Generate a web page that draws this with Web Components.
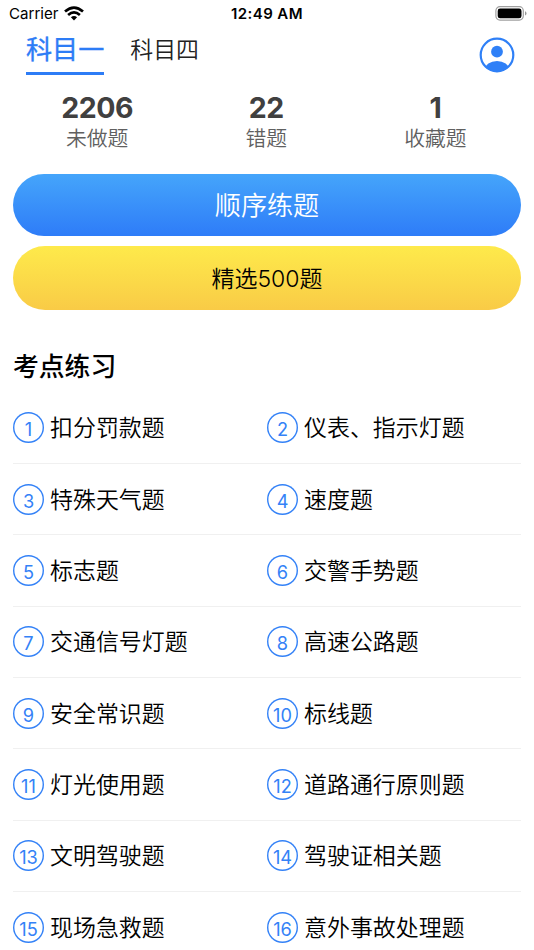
<!DOCTYPE html>
<html lang="zh-CN">
<head>
<meta charset="utf-8">
<title>考点练习</title>
<style>
html,body{margin:0;background:#fff}
body{height:950px;overflow:hidden;font-family:Inter,"Noto Sans CJK SC",sans-serif;color:#0a0a0a}
</style>
</head>
<body>
<exam-app></exam-app>
<script>
const define = (name, html, setup) => {
  const t = document.createElement('template');
  t.innerHTML = html;
  customElements.define(name, class extends HTMLElement {
    connectedCallback() {
      if (this.shadowRoot) return;
      this.attachShadow({mode: 'open'}).append(t.content.cloneNode(true));
      if (setup) setup(this, this.shadowRoot);
    }
  });
};

define('status-bar', `
<style>
:host{display:grid;grid-template-columns:1fr auto 1fr;align-items:center;height:28px;padding:0 7px 0 9px;box-sizing:border-box;font-size:15.1px;line-height:28px;color:#000}
.left{display:flex;align-items:center;gap:6px}
.left svg{margin-top:-2px}
.time{font-weight:600;font-size:15px;letter-spacing:.4px;margin-left:-2px}
.battery{justify-self:end;display:block;margin-top:-2px}
svg{display:block}
</style>
<div class="left"><span>Carrier</span>
<svg width="20" height="15" viewBox="0 0 20 15" fill="none" stroke="#000" stroke-width="2.7"><path d="M1 5.6Q10-2.2 19 5.6"/><path d="M4.1 9Q10 3.8 15.9 9"/><path d="M10 14.4 6.9 11.3Q10 8.6 13.1 11.3Z" fill="#000" stroke="none"/></svg></div>
<span class="time">12:49 AM</span>
<svg class="battery" width="32" height="15" viewBox="0 0 32 15"><rect x=".9" y=".7" width="27.4" height="13.4" rx="4" fill="none" stroke="#a0a0a0" stroke-width="1.2"/><rect x="2.7" y="2.5" width="23.8" height="9.8" rx="2.4" fill="#000"/><path d="M30 5.2v4.4q1.5-.6 1.5-2.2T30 5.2Z" fill="#999"/></svg>`);

define('subject-tab', `
<style>
:host{display:block;height:47px;box-sizing:border-box;font-size:22.9px;line-height:44px;font-weight:350;color:#222;border-bottom:3px solid transparent}
:host([active]){font-size:26.1px;line-height:44px;color:#2d7cf6;font-weight:400;-webkit-text-stroke:.35px #2d7cf6;border-color:#2d7cf6}
</style><slot></slot>`);

define('user-icon', `
<style>:host{display:block}svg{display:block}</style>
<svg width="36" height="36" viewBox="0 0 36 36"><defs><clipPath id="c"><circle cx="18" cy="18" r="16.8"/></clipPath></defs><g clip-path="url(#c)" fill="#2f80f7"><circle cx="18" cy="14.7" r="5.9"/><ellipse cx="18" cy="33" rx="12.2" ry="9.1"/></g><circle cx="18" cy="18" r="16.3" fill="none" stroke="#2f80f7" stroke-width="2.2"/></svg>`);

define('stat-cell', `
<style>
:host{display:block;flex:1;text-align:center;font-size:20.8px;line-height:28px;font-weight:350;color:#606060}
b{display:block;font-size:28.5px;line-height:34px;font-weight:700;letter-spacing:-.5px;color:#404040}
</style><b></b><slot></slot>`, (el, r) => r.querySelector('b').textContent = el.getAttribute('value'));

define('pill-button', `
<style>
:host{display:flex;align-items:center;justify-content:center;height:62px;padding-bottom:1px;box-sizing:border-box;border-radius:31px;font-size:26.1px;font-weight:350;color:#fff;background:linear-gradient(#45a5fb,#2e7cf8)}
:host([kind=gold]){height:64px;padding-bottom:2px;border-radius:32px;font-size:23px;color:#000;background:linear-gradient(#feea4b,#f9cb46)}
</style><slot></slot>`);

define('topic-item', `
<style>
:host{display:flex;align-items:center;height:71.33px;box-sizing:border-box;border-bottom:1px solid #f0f0f0;font-size:22.95px;line-height:32px;font-weight:350;white-space:nowrap;gap:6px;color:#000}
span{padding-top:1px}
i{font-style:normal;font-weight:400;flex:none;width:31px;height:31px;border-radius:50%;box-shadow:inset 0 0 0 1.4px #3482f7;color:#3482f7;font-size:18.2px;line-height:34px;text-align:center}
</style><i></i><span><slot></slot></span>`, (el, r) => r.querySelector('i').textContent = el.getAttribute('number'));

define('topic-grid', `
<style>:host{display:grid;grid-template-columns:1fr 1fr}</style><slot></slot>`);

define('exam-app', `
<style>
:host{display:block;height:950px;overflow:hidden}
nav{display:flex;padding:0 19.5px 0 26px;height:47px;gap:26px}
user-icon{margin:9px 0 0 auto}
.stats{display:flex;padding:16px 14px 0 12.5px}
.actions{display:flex;flex-direction:column;gap:10.5px;padding:20.5px 13px 0}
h2{margin:37.4px 13px 0;font-size:25.8px;line-height:40px;font-weight:500;color:#000}
topic-grid{margin:5.3px 13px 0}
</style>
<status-bar></status-bar>
<nav><subject-tab active>科目一</subject-tab><subject-tab>科目四</subject-tab><user-icon></user-icon></nav>
<div class="stats"><stat-cell value="2206">未做题</stat-cell><stat-cell value="22">错题</stat-cell><stat-cell value="1">收藏题</stat-cell></div>
<div class="actions"><pill-button>顺序练题</pill-button><pill-button kind="gold">精选500题</pill-button></div>
<h2>考点练习</h2>
<topic-grid></topic-grid>`, (el, r) => {
  const grid = r.querySelector('topic-grid');
  ['扣分罚款题','仪表、指示灯题','特殊天气题','速度题','标志题','交警手势题','交通信号灯题','高速公路题','安全常识题','标线题','灯光使用题','道路通行原则题','文明驾驶题','驾驶证相关题','现场急救题','意外事故处理题'].forEach((name, n) => {
    const item = document.createElement('topic-item');
    item.setAttribute('number', n + 1);
    item.textContent = name;
    grid.append(item);
  });
});
</script>
</body>
</html>
